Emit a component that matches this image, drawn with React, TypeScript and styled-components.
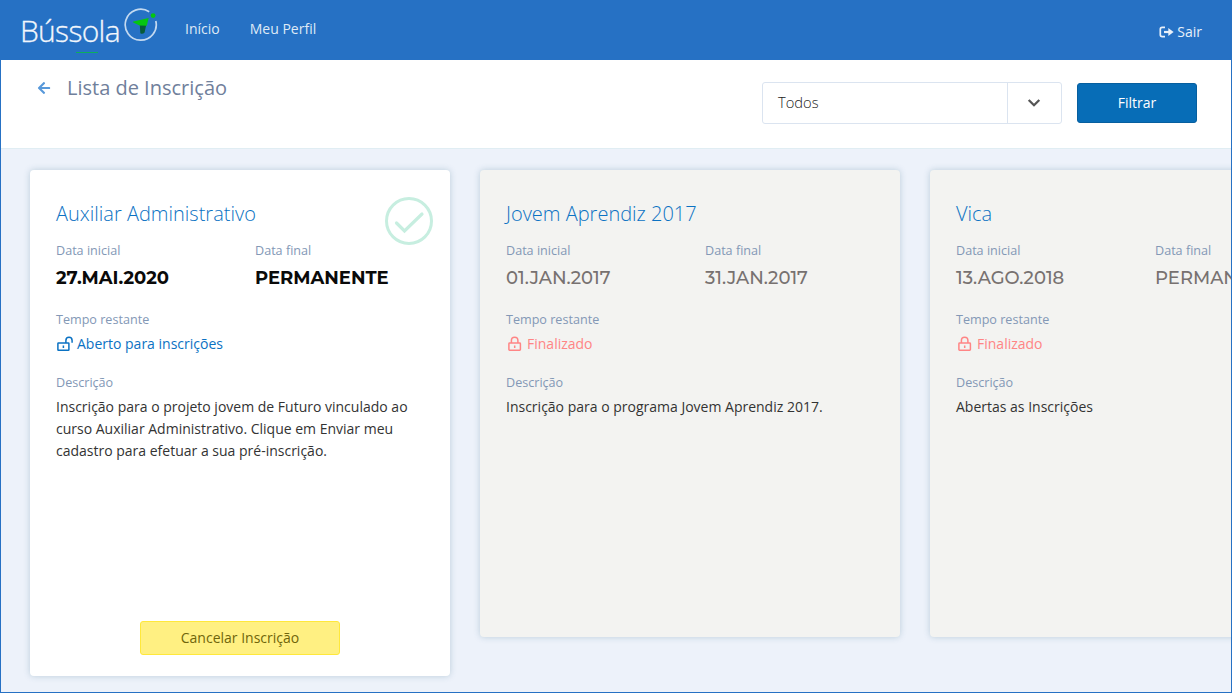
import React from 'react';
import styled, { createGlobalStyle } from 'styled-components';
import { FaArrowLeft } from 'react-icons/fa';

const GlobalStyle = createGlobalStyle`
  * { box-sizing: border-box; }
  body { margin: 0; overflow: hidden; font-family: 'Open Sans', sans-serif; font-size: 14px; color: #333; }
  h1, h2, p { margin: 0; font-weight: 400; }
  button { font: inherit; cursor: pointer; }
`;

const Page = styled.div`
  display: flex;
  flex-direction: column;
  width: 1232px;
  height: 693px;
  overflow: hidden;
  background: #edf2fa;
  border: solid #2671c4;
  border-width: 0 1px 1px;
`;

const Header = styled.header`
  display: flex;
  flex: none;
  height: 60px;
  padding: 0 29px 0 20px;
  background: #2671c4;
`;

const Logo = styled.div`
  display: flex;
  position: relative;
  width: 164px;
  height: 60px;
  color: #f1f6fc;
`;

const LogoText = styled.span`
  width: 103px;
  padding-top: 10px;
  font-size: 30px;
  font-weight: 300;
  line-height: 42px;
  letter-spacing: -0.7px;
  text-indent: -1px;
  -webkit-text-stroke: 0.3px currentColor;
  white-space: nowrap;
`;

const LogoMark = styled.svg`
  flex: none;
  width: 36px;
  height: 36px;
  margin-top: 7px;
`;

const LogoLine = styled.span`
  position: absolute;
  left: 55px;
  top: 52px;
  width: 22px;
  height: 1px;
  background: #0cae5c;
`;

const Nav = styled.nav`
  display: flex;
  gap: 30px;
  line-height: 58px;
`;

const NavLink = styled.a`
  color: #dfeaf6;
`;

const Logout = styled.a`
  display: flex;
  align-items: center;
  gap: 3px;
  height: 63px;
  margin-left: auto;
  color: #e8f0f9;
`;

const Toolbar = styled.section`
  display: flex;
  flex: none;
  height: 89px;
  padding: 21px 34px 0 36px;
  background: #fff;
  border-bottom: 1px solid #e0edf3;
`;

const Back = styled.a`
  width: 30px;
  color: #5899da;
  svg { display: block; }
`;

const PageTitle = styled.h1`
  flex: 1;
  margin-top: -8px;
  font-size: 20px;
  line-height: 30px;
  color: #70809b;
`;

const Select = styled.div`
  display: flex;
  width: 300px;
  height: 42px;
  margin: 1px 15px 0 0;
  border: 1px solid #dbe4f0;
  border-radius: 3px;
`;

const SelectValue = styled.span`
  flex: 1;
  padding-left: 15px;
  font-size: 14.7px;
  font-weight: 300;
  line-height: 39px;
  color: #222;
`;

const SelectToggle = styled.span`
  display: flex;
  align-items: center;
  justify-content: center;
  width: 54px;
  padding-right: 1px;
  border-left: 1px solid #dbe4f0;
`;

const FilterButton = styled.button`
  width: 120px;
  height: 40px;
  margin-top: 2px;
  padding: 0 0 2px;
  color: #fff;
  background: #076db7;
  border: 1px solid #065f9f;
  border-radius: 3px;
`;

const CardList = styled.main`
  display: flex;
  align-items: flex-start;
  gap: 30px;
  padding: 21px 0 0 29px;
`;

const Card = styled.article<{ $open?: boolean }>`
  display: flex;
  position: relative;
  flex: 0 0 420px;
  flex-direction: column;
  height: ${p => (p.$open ? 506 : 467)}px;
  padding: 29px 26px 21px;
  background: ${p => (p.$open ? '#fff' : '#f3f3f1')};
  border-radius: 4px;
  box-shadow: 0 0 6px rgba(70, 120, 145, 0.3);
`;

const CardTitle = styled.h2`
  font-size: 20px;
  font-weight: 300;
  line-height: 30px;
  color: #0b72c3;
`;

const Dates = styled.div`
  display: grid;
  grid-template-columns: 199px 1fr;
  margin-top: 12px;
`;

const Label = styled.div`
  font-size: 12.6px;
  line-height: 19px;
  color: #8398b6;
`;

const DateValue = styled.div<{ $open?: boolean }>`
  margin-top: 5px;
  font-family: Montserrat, Inter, sans-serif;
  font-size: 18px;
  font-weight: ${p => (p.$open ? 700 : 500)};
  line-height: 26px;
  white-space: nowrap;
  color: ${p => (p.$open ? '#0a0a0a' : '#777170')};
`;

const Field = styled.div<{ $gap: number }>`
  margin-top: ${p => p.$gap}px;
`;

const Status = styled.div<{ $open?: boolean }>`
  display: flex;
  height: 24px;
  margin-top: 3px;
  line-height: 24px;
  color: ${p => (p.$open ? '#0b72c3' : '#ff8585')};
`;

const StatusIcon = styled.svg`
  width: 18px;
  height: 18px;
  margin: 3px 3px 0 0;
`;

const Description = styled.p`
  margin-top: 4px;
  line-height: 22px;
  white-space: pre-line;
`;

const CheckBadge = styled.svg`
  position: absolute;
  top: 27px;
  right: 17px;
  width: 48px;
  height: 48px;
`;

const CancelButton = styled.button`
  align-self: center;
  width: 200px;
  height: 34px;
  margin-top: auto;
  padding: 0 0 2px;
  color: #6f650b;
  background: #fff082;
  border: 1px solid #ffe83b;
  border-radius: 3px;
`;

function LockIcon({ open }: { open?: boolean }) {
  return (
    <StatusIcon viewBox="0 0 18 18" fill="none" stroke="currentColor" strokeWidth="1.5">
      {open ? (
        <>
          <rect x="1.9" y="8" width="11" height="7.2" rx=".5" />
          <path d="M9.9 8V5.4a3.1 3.1 0 0 1 6.2 0v2.4M7.4 10.4v2.7" />
        </>
      ) : (
        <>
          <rect x="2.9" y="8" width="11.5" height="7.2" rx=".7" />
          <path d="M5.4 8V5.6a3.25 3.25 0 0 1 6.5 0v2.5M8.7 10.4v2.7" />
        </>
      )}
    </StatusIcon>
  );
}

interface Enrollment {
  title: string;
  start: string;
  end: string;
  status: string;
  description: string;
  open?: boolean;
}

const enrollments: Enrollment[] = [
  {
    title: 'Auxiliar Administrativo',
    start: '27.MAI.2020',
    end: 'PERMANENTE',
    status: 'Aberto para inscrições',
    description:
      'Inscrição para o projeto jovem de Futuro vinculado ao\ncurso Auxiliar Administrativo. Clique em Enviar meu\ncadastro para efetuar a sua pré-inscrição.',
    open: true,
  },
  {
    title: 'Jovem Aprendiz 2017',
    start: '01.JAN.2017',
    end: '31.JAN.2017',
    status: 'Finalizado',
    description: 'Inscrição para o programa Jovem Aprendiz 2017.',
  },
  {
    title: 'Vica',
    start: '13.AGO.2018',
    end: 'PERMANENTE',
    status: 'Finalizado',
    description: 'Abertas as Inscrições',
  },
];

function EnrollmentCard({ item }: { item: Enrollment }) {
  return (
    <Card $open={item.open}>
      <CardTitle>{item.title}</CardTitle>
      {item.open && (
        <CheckBadge viewBox="0 0 48 48" fill="none" stroke="#c7eee0" strokeWidth="3">
          <circle cx="24" cy="24" r="22.5" />
          <path d="m11.5 26 8 8L37 17" strokeWidth="3.2" strokeLinecap="round" />
        </CheckBadge>
      )}
      <Dates>
        <div>
          <Label>Data inicial</Label>
          <DateValue $open={item.open}>{item.start}</DateValue>
        </div>
        <div>
          <Label>Data final</Label>
          <DateValue $open={item.open}>{item.end}</DateValue>
        </div>
      </Dates>
      <Field $gap={19}>
        <Label>Tempo restante</Label>
        <Status $open={item.open}>
          <LockIcon open={item.open} />
          {item.status}
        </Status>
      </Field>
      <Field $gap={17}>
        <Label>Descrição</Label>
        <Description>{item.description}</Description>
      </Field>
      {item.open && <CancelButton>Cancelar Inscrição</CancelButton>}
    </Card>
  );
}

export default function App() {
  return (
    <>
      <GlobalStyle />
      <Page>
        <Header>
          <Logo>
            <LogoText>Bússola</LogoText>
            <LogoMark viewBox="0 0 36 36">
              <path d="M25.2 4.7A15.5 15.5 0 1 0 31.8 14" fill="none" stroke="#c3d9f0" strokeWidth="1.7" />
              <path d="M15.8 18 22.3 17.5 20.6 25.6Q18.5 27.6 16.3 26.2Z" fill="#075b38" />
              <path d="M8.8 15.2Q9 14.4 10.5 14.2L24.6 11 22.8 18.8 15.5 18.5Z" fill="#05c610" />
              <circle cx="29.1" cy="8.6" r="2.4" fill="#05c610" />
            </LogoMark>
            <LogoLine />
          </Logo>
          <Nav>
            <NavLink>Início</NavLink>
            <NavLink>Meu Perfil</NavLink>
          </Nav>
          <Logout>
            <svg width="15" height="14" viewBox="0 0 15 14" fill="none" stroke="currentColor" strokeWidth="1.7">
              <path d="M6 2.3H3.2Q1.3 2.3 1.3 4.2V9.8Q1.3 11.7 3.2 11.7H6" />
              <path d="M5 7H12.5" strokeWidth="2.2" />
              <path d="M9.3 2.9 14.6 7 9.3 11.1Z" fill="currentColor" stroke="none" />
            </svg>
            Sair
          </Logout>
        </Header>
        <Toolbar>
          <Back><FaArrowLeft size={14} /></Back>
          <PageTitle>Lista de Inscrição</PageTitle>
          <Select>
            <SelectValue>Todos</SelectValue>
            <SelectToggle>
              <svg width="14" height="10" viewBox="0 0 14 10" fill="none" stroke="#555" strokeWidth="2.3">
                <path d="m1.7 2 5.3 5.2L12.3 2" />
              </svg>
            </SelectToggle>
          </Select>
          <FilterButton>Filtrar</FilterButton>
        </Toolbar>
        <CardList>
          {enrollments.map(item => <EnrollmentCard key={item.title} item={item} />)}
        </CardList>
      </Page>
    </>
  );
}
